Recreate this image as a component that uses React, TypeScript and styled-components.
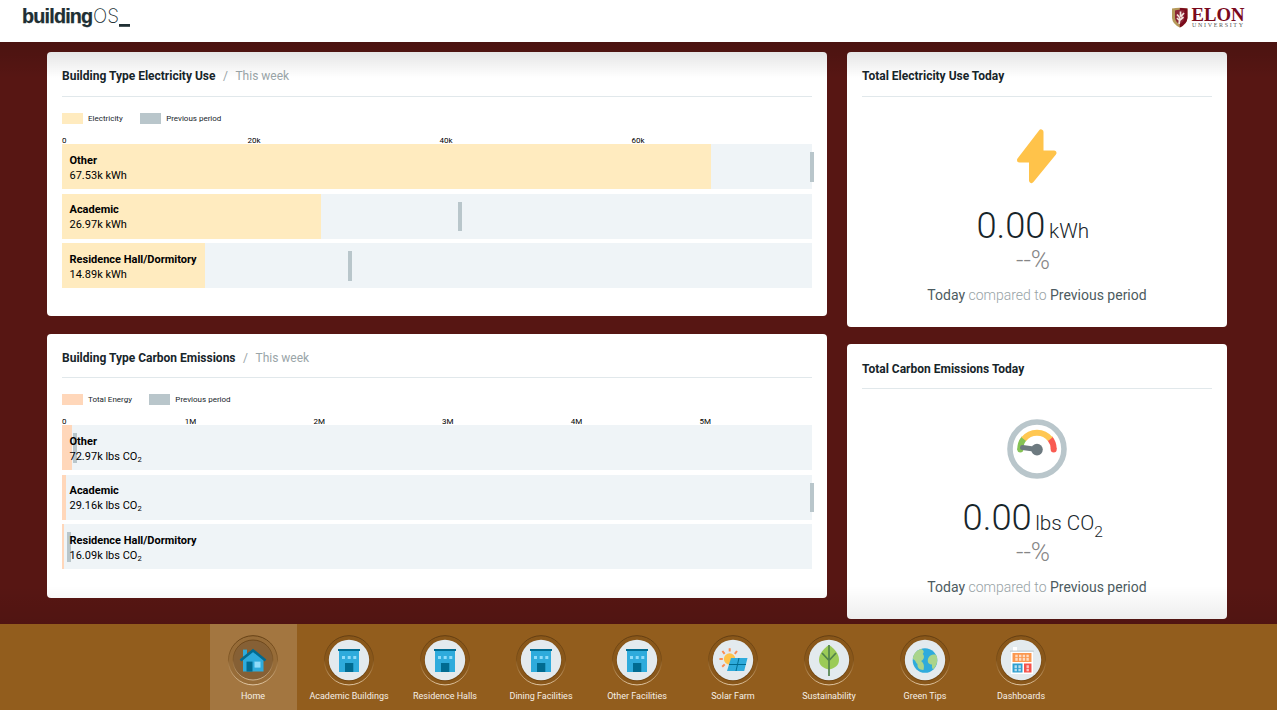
import React from "react";
import styled, { createGlobalStyle } from "styled-components";

const GlobalStyle = createGlobalStyle`
  * { box-sizing: border-box; }
  body {
    margin: 0;
    font-family: Roboto, "Liberation Sans", sans-serif;
    color: #17252a;
    overflow: hidden;
  }
`;

const Page = styled.div`
  display: flex;
  flex-direction: column;
  width: 1277px;
  height: 710px;
`;

const Header = styled.header`
  display: flex;
  justify-content: space-between;
  flex: none;
  height: 42px;
  padding: 0 31px 0 22px;
  background: #fff;
`;

const Main = styled.main`
  position: relative;
  display: flex;
  gap: 20px;
  flex: none;
  height: 582px;
  padding: 10px 50px 0 47px;
  background: #571613;

  &::after {
    content: "";
    position: absolute;
    inset: 0;
    pointer-events: none;
    background:
      linear-gradient(to bottom, rgba(0, 0, 0, 0.14), rgba(0, 0, 0, 0) 36px),
      linear-gradient(to top, rgba(0, 0, 0, 0.08), rgba(0, 0, 0, 0) 38px);
  }
`;

const Column = styled.div<{ $width: number; $gap: number }>`
  display: flex;
  flex-direction: column;
  gap: ${(p) => p.$gap}px;
  width: ${(p) => p.$width}px;
`;

const Card = styled.section<{ $height: number }>`
  flex: none;
  height: ${(p) => p.$height}px;
  padding: 0 15px;
  background: #fff;
  border-radius: 4px;
`;

const CardHeader = styled.h2<{ $height: number; $top?: number }>`
  display: flex;
  height: ${(p) => p.$height}px;
  margin: 0;
  padding-top: ${(p) => p.$top ?? 15}px;
  border-bottom: 1px solid #e1e8eb;
  font-size: 12px;
  line-height: 18px;
  font-weight: 700;
  white-space: pre;
`;

const Period = styled.span`
  color: #9aa5a8;
  font-weight: 400;
`;

const Slash = styled(Period)`
  padding: 0 7.5px;
`;

const Legend = styled.div`
  display: flex;
  align-items: center;
  height: 11px;
  margin-top: 16px;
  font-size: 8px;
`;

const Swatch = styled.span<{ $color: string }>`
  width: 21px;
  height: 11px;
  margin-right: 5px;
  background: ${(p) => p.$color};
`;

const LegendLabel = styled.span`
  margin-right: 17.4px;
`;

const Axis = styled.div`
  position: relative;
  height: 20px;
  font-size: 8px;
  line-height: 10px;
  color: #000;
`;

const Tick = styled.span<{ $first: boolean }>`
  position: absolute;
  bottom: -2px;
  transform: ${(p) => (p.$first ? "none" : "translateX(-50%)")};
`;

const Bars = styled.div`
  display: flex;
  flex-direction: column;
  gap: 4.5px;
`;

const Track = styled.div`
  position: relative;
  height: 45px;
  background: #eff4f7;
`;

const Fill = styled.div<{ $color: string }>`
  position: absolute;
  inset: 0 auto 0 0;
  background: ${(p) => p.$color};
`;

const Marker = styled.div`
  position: absolute;
  top: 8.4px;
  width: 4px;
  height: 29.2px;
  margin-left: -2px;
  background: #b9c6cb;
`;

const BarText = styled.div`
  position: relative;
  padding: 8.6px 0 0 7.5px;
  font-size: 11px;
  line-height: 15px;
  color: #000;
  white-space: nowrap;

  sub {
    font-size: 7.5px;
    line-height: 0;
    vertical-align: -2px;
  }
`;

const BarName = styled.div`
  font-weight: 700;
`;

const Metric = styled.div`
  display: flex;
  flex-direction: column;
  align-items: center;
  padding-top: 30px;
`;

const MetricIcon = styled.svg`
  width: 60px;
  height: 60px;
`;

const Value = styled.div`
  margin-top: 17px;
  padding-right: 8.5px;
  font-size: 36.3px;
  line-height: 44px;
  font-weight: 300;
  white-space: nowrap;
`;

const Unit = styled.span`
  margin-left: 3.5px;
  font-size: 20.7px;

  sub {
    font-size: 15.5px;
    line-height: 0;
    vertical-align: -7px;
  }
`;

const Percent = styled.div`
  margin-top: -6px;
  padding-right: 8px;
  font-size: 26px;
  line-height: 26px;
  font-weight: 300;
  color: #868686;
`;

const Comparison = styled.div`
  margin-top: 13px;
  font-size: 14px;
  line-height: 18px;
  color: #4c5b60;
  white-space: nowrap;

  span {
    color: #98a3a6;
    font-weight: 300;
  }
`;

const Nav = styled.nav`
  display: flex;
  gap: 9px;
  flex: none;
  height: 86px;
  padding-left: 210px;
  background: #925d1d;
`;

const NavItem = styled.a<{ $active: boolean }>`
  display: flex;
  flex-direction: column;
  align-items: center;
  flex: none;
  width: 87px;
  padding: 10px 1px 0 0;
  background: ${(p) => (p.$active ? "#a37640" : "transparent")};
  color: #f6efe6;
  font-size: 9px;
  line-height: 12px;
  white-space: nowrap;
`;

const NavIcon = styled.svg`
  width: 52px;
  height: 52px;
  margin-bottom: 4px;
`;

type BarRow = { name: string; value: string; carbon?: boolean; fill: number; mark: number };

type ChartProps = {
  title: string;
  series: string;
  color: string;
  headerHeight: number;
  ticks: [string, number][];
  rows: BarRow[];
};

const BarChartCard = ({ title, series, color, headerHeight, ticks, rows }: ChartProps) => (
  <Card $height={264}>
    <CardHeader $height={headerHeight}>
      {title}
      <Slash>/</Slash>
      <Period>This week</Period>
    </CardHeader>
    <Legend>
      <Swatch $color={color} />
      <LegendLabel>{series}</LegendLabel>
      <Swatch $color="#b9c6cb" />
      <LegendLabel>Previous period</LegendLabel>
    </Legend>
    <Axis>
      {ticks.map(([label, left]) => (
        <Tick key={label} $first={left === 0} style={{ left }}>
          {label}
        </Tick>
      ))}
    </Axis>
    <Bars>
      {rows.map((row) => (
        <Track key={row.name}>
          <Fill $color={color} style={{ width: row.fill }} />
          <Marker style={{ left: row.mark }} />
          <BarText>
            <BarName>{row.name}</BarName>
            {row.value}
            {row.carbon && <sub>2</sub>}
          </BarText>
        </Track>
      ))}
    </Bars>
  </Card>
);

type MetricProps = {
  title: string;
  titleTop: number;
  unit: React.ReactNode;
  children: React.ReactNode;
};

const MetricCard = ({ title, titleTop, unit, children }: MetricProps) => (
  <Card $height={275}>
    <CardHeader $height={45} $top={titleTop}>
      {title}
    </CardHeader>
    <Metric>
      <MetricIcon viewBox="0 0 60 60">{children}</MetricIcon>
      <Value>
        0.00<Unit>{unit}</Unit>
      </Value>
      <Percent>--%</Percent>
      <Comparison>
        Today <span>compared to</span> Previous period
      </Comparison>
    </Metric>
  </Card>
);

const BoltArt = () => (
  <path
    d="M34 4.5 L34 25.5 H47 L24.5 53 V32.5 H12.5 Z"
    transform="translate(0 .5)"
    fill="#ffc34a"
    stroke="#ffc34a"
    strokeWidth="5"
    strokeLinejoin="round"
  />
);

const GaugeArt = () => (
  <g fill="none" strokeWidth="6">
    <circle cx="30" cy="30" r="27" stroke="#b9c6cb" strokeWidth="5.6" />
    <path d="M13.3 30.8 A16.8 16.8 0 0 1 17 19.5" stroke="#85c255" />
    <path d="M43 19.5 A16.8 16.8 0 0 1 46.7 30" stroke="#f95b52" />
    <circle cx="13.3" cy="30.6" r="3" fill="#85c255" stroke="none" />
    <circle cx="46.7" cy="30.6" r="3" fill="#f95b52" stroke="none" />
    <path d="M16.7 20.2 A16.8 16.8 0 0 1 43.3 20.2" stroke="#ffc752" />
    <path d="M15.5 28.5 L30 30.5" stroke="#6d7a80" strokeWidth="5" strokeLinecap="round" />
    <circle cx="30" cy="30.6" r="5.8" fill="#6d7a80" stroke="none" />
  </g>
);

const HomeArt = () => (
  <g transform="translate(-.5 -.4)">
    <path d="M16.5 16h4v7h-4z" fill="#2eabdc" />
    <path d="M16.5 26 L26.5 17.5 L37 26 V38 H16.5Z" fill="#2eabdc" />
    <path d="M14 26.8 L26.5 16.8 L39 26.8" fill="none" stroke="#006b91" strokeWidth="2.6" />
    <path d="M20 28h6v10h-6z" fill="#006b91" />
    <path d="M28 28h6v6h-6z" fill="#8fdcfa" />
  </g>
);

const BuildingArt = () => (
  <g>
    <path d="M16 16h20v22H16z" fill="#2eabdc" />
    <path d="M15 15h22v2H15z" fill="#006b91" />
    <path d="M19 22h3v3h-3zM24.7 22h3v3h-3zM30.3 22h3v3h-3z" fill="#8fdcfa" />
    <path d="M22 29h8.3v9H22z" fill="#006b91" />
  </g>
);

const SolarArt = () => (
  <g>
    <path
      d="M22.7 14.2v3.4M15.4 17l2.2 2.8M30 17l-2.2 2.8M12.4 25h3.4M15.2 32.8l2.5-2.4"
      stroke="#fb8c51"
      strokeWidth="2"
    />
    <circle cx="22.6" cy="25" r="5.7" fill="#ffc34a" />
    <path d="M24 24h16.5l-3.3 13H20z" fill="#2eabdc" />
    <path d="M32 24l-3 13M22 30.5h17" stroke="#006b91" strokeWidth="1" />
  </g>
);

const LeafArt = () => (
  <g>
    <path d="M26 11 C32 15 36 20 36 26 C36 31 32 34.5 26 35.5 C20 34.5 16 31 16 26 C16 20 20 15 26 11Z" fill="#9bcb57" />
    <path d="M26 11v31M26 26.5l-7-7.5M26 26.5l7-7.5" fill="none" stroke="#52824b" strokeWidth="1.7" />
  </g>
);

const EarthArt = () => (
  <g>
    <circle cx="26" cy="26.5" r="12.3" fill="#2eabdc" />
    <path
      d="M22 14.9 C25 16 25.5 18 23.7 20 C26 22 25 26 22 27 C25 29 25.5 32 24.5 36 C20 36 18 33 18.5 30 C16.5 29 17 26 13.8 25.3 C14.2 20 17 16.5 22 14.9Z"
      fill="#aad48b"
    />
    <path
      d="M38 22.7 C39 28 37.5 32 34 35.5 C32.5 33.5 33 32 33 30.5 C29.5 30.5 28.2 28 29 24.7 C30.5 20.7 34 19.8 36.9 20.7Z"
      fill="#aad48b"
    />
  </g>
);

const DashboardArt = () => (
  <g>
    <path d="M18 13h4v4h-4z" fill="#fff" />
    <path d="M15.2 17.2h23.5" stroke="#b9c6cb" strokeWidth="1.2" />
    <path d="M16 17.8h22V40H16z" fill="#fff" />
    <path d="M17.5 19h19v9h-19z" fill="#fb9850" />
    <path d="M17.5 29.5h10v9h-10z" fill="#2e9fd0" />
    <path d="M29 29.5h7.5v9H29z" fill="#f5524c" />
    <path
      d="M21.5 20.7v6M25.2 20.7v6M28.9 20.7v6M32.6 20.7v6M20.7 31.3v6M24.6 31.3v6M32.7 31.3v6"
      stroke="#fff"
      strokeOpacity=".65"
      strokeWidth="2.4"
      strokeDasharray="2.6 .8"
    />
  </g>
);

const NAV: [string, React.FC][] = [
  ["Home", HomeArt],
  ["Academic Buildings", BuildingArt],
  ["Residence Halls", BuildingArt],
  ["Dining Facilities", BuildingArt],
  ["Other Facilities", BuildingArt],
  ["Solar Farm", SolarArt],
  ["Sustainability", LeafArt],
  ["Green Tips", EarthArt],
  ["Dashboards", DashboardArt],
];

const BrandLogo = () => (
  <svg width="112" height="42" viewBox="0 0 112 42" fill="#202f33">
    <text x="0" y="23.3" fontFamily="Liberation Sans" fontWeight="700" fontSize="19.8" letterSpacing="-.82" stroke="#202f33" strokeWidth=".25">
      building
    </text>
    <text x="71" y="23.3" fontFamily="Inter" fontWeight="200" fontSize="19.8" textLength="26" lengthAdjust="spacingAndGlyphs">
      OS
    </text>
    <path d="M97 24h11v2.8H97z" />
  </svg>
);

const ElonLogo = () => (
  <svg width="75" height="42" viewBox="0 0 75 42">
    <path d="M1 8.5 Q8.5 7 16.5 8.5 V18 Q16 24 8.8 27.5 Q1.5 24 1 18Z" fill="#b59a5b" />
    <path d="M8.8 8 Q13 7.8 16.5 8.5 V18 Q16 24 8.8 27.5Z" fill="#7a0a1c" />
    <path d="M4 10.5 Q8 9 13.5 10.5 V18 Q13 21.5 8.5 24.5 Q4.5 21.5 4 18Z" fill="#8a2635" />
    <path d="M8 24 L9 18 M9 21 L6 18 M9 20 L12.5 17 M9 18 L6 14.5 M9.5 17 L13 13 M9.5 16 L9.5 11.5" stroke="#f3e7df" strokeWidth="1.7" fill="none" />
    <text x="20.5" y="21.3" fontFamily="Liberation Serif" fontWeight="700" fontSize="18" fill="#7a0a1c" textLength="53" lengthAdjust="spacingAndGlyphs">
      ELON
    </text>
    <text x="21" y="27" fontFamily="Liberation Serif" fontSize="6" fill="#555" textLength="51">
      UNIVERSITY
    </text>
  </svg>
);

export default function App() {
  return (
    <Page>
      <GlobalStyle />
      <Header>
        <BrandLogo />
        <ElonLogo />
      </Header>
      <Main>
        <Column $width={780} $gap={18}>
          <BarChartCard
            title="Building Type Electricity Use"
            series="Electricity"
            color="#ffebbf"
            headerHeight={45}
            ticks={[["0", 0], ["20k", 192], ["40k", 384], ["60k", 576]]}
            rows={[
              { name: "Other", value: "67.53k kWh", fill: 649, mark: 750 },
              { name: "Academic", value: "26.97k kWh", fill: 259, mark: 398 },
              { name: "Residence Hall/Dormitory", value: "14.89k kWh", fill: 143, mark: 288 },
            ]}
          />
          <BarChartCard
            title="Building Type Carbon Emissions"
            series="Total Energy"
            color="#ffd7ba"
            headerHeight={44}
            ticks={[["0", 0], ["1M", 128.6], ["2M", 257.2], ["3M", 385.8], ["4M", 514.5], ["5M", 643.2]]}
            rows={[
              { name: "Other", value: "72.97k lbs CO", carbon: true, fill: 10, mark: 12.5 },
              { name: "Academic", value: "29.16k lbs CO", carbon: true, fill: 4, mark: 750 },
              { name: "Residence Hall/Dormitory", value: "16.09k lbs CO", carbon: true, fill: 2, mark: 7 },
            ]}
          />
        </Column>
        <Column $width={380} $gap={17}>
          <MetricCard title="Total Electricity Use Today" titleTop={15} unit="kWh">
            <BoltArt />
          </MetricCard>
          <MetricCard title="Total Carbon Emissions Today" titleTop={16} unit={<>lbs CO<sub>2</sub></>}>
            <GaugeArt />
          </MetricCard>
        </Column>
      </Main>
      <Nav>
        {NAV.map(([label, Art], i) => (
          <NavItem key={label} $active={i === 0}>
            <NavIcon viewBox="0 0 52 52">
              <defs>
                <linearGradient id={`ring${i}`} x1="0" y1="0" x2="0" y2="1">
                  <stop offset="0" stopColor="#5e3a10" stopOpacity=".9" />
                  <stop offset=".5" stopColor="#6b4413" stopOpacity=".4" />
                  <stop offset=".65" stopColor="#e0c49e" stopOpacity=".2" />
                  <stop offset="1" stopColor="#ead3b3" stopOpacity=".9" />
                </linearGradient>
              </defs>
              <circle cx="26" cy="26.3" r="24.6" fill="#4a2c08" fillOpacity=".13" stroke={`url(#ring${i})`} strokeWidth="1" />
              {i === 0 ? (
                <circle cx="26" cy="26" r="20" fill="#866035" stroke={`url(#ring${i})`} strokeWidth=".8" />
              ) : (
                <>
                  <circle cx="26" cy="26.6" r="20.6" fill="#4a2c08" fillOpacity=".35" />
                  <circle cx="26" cy="26" r="20.2" fill="#e3eaee" />
                </>
              )}
              <Art />
            </NavIcon>
            {label}
          </NavItem>
        ))}
      </Nav>
    </Page>
  );
}
